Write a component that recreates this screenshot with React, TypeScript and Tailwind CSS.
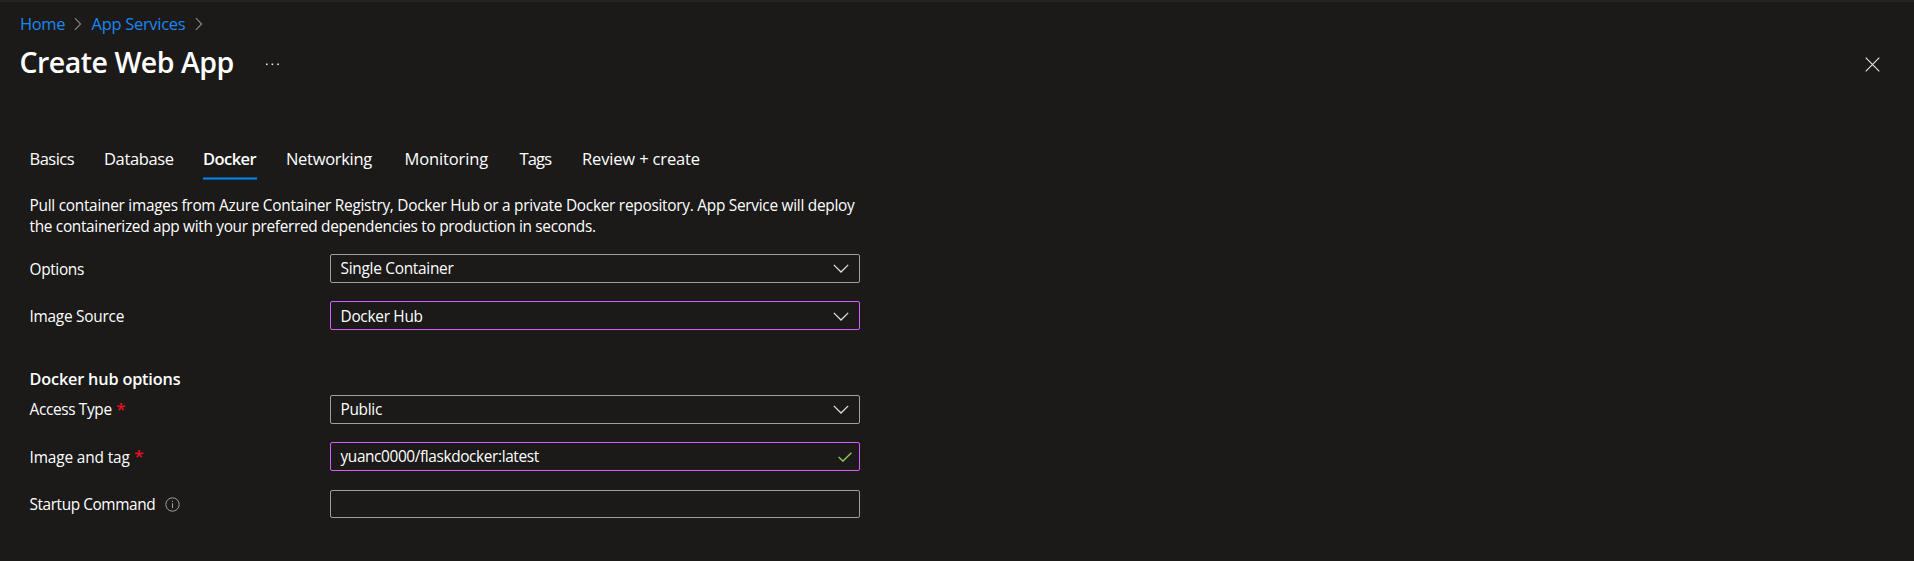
import type { ReactNode } from "react";

function Crumb() {
  return (
    <svg width="8" height="14" viewBox="0 0 8 14" fill="none" stroke="#8a8886" strokeWidth="1.1">
      <path d="M1 1.2 6.6 7 1 12.8" />
    </svg>
  );
}

function Chevron({ className = "" }: { className?: string }) {
  return (
    <svg width="16" height="9" viewBox="0 0 16 9" className={className} fill="none" stroke="#e0dedc" strokeWidth="1.3">
      <path d="M0.8 0.9 8 8 15.2 0.9" />
    </svg>
  );
}

function Check() {
  return (
    <svg width="14" height="10" viewBox="0 0 14 10" fill="none" stroke="#92c353" strokeWidth="1.4">
      <path d="M0.6 5 5 9.1 13.4 0.7" />
    </svg>
  );
}

function Info() {
  return (
    <svg width="15" height="15" viewBox="0 0 15 15" fill="none" stroke="#a19f9d" strokeWidth="1">
      <circle cx="7.5" cy="7.5" r="6.7" />
      <path d="M7.5 6.2v5M7.5 3.8v1.2" />
    </svg>
  );
}

function Required() {
  return <span className="mb-[3px] ml-[4.5px] text-[17px] leading-none font-semibold text-[#e81123]">*</span>;
}

function Row({ label, className, children }: { label: ReactNode; className: string; children: ReactNode }) {
  return (
    <div className={`flex w-[830px] ${className}`}>
      <div className="flex h-[29px] w-[300px] shrink-0 items-center">{label}</div>
      {children}
    </div>
  );
}

function Box({ className, children }: { className: string; children?: ReactNode }) {
  return (
    <div className={`flex w-[530px] items-center justify-between rounded-[2px] border pl-[10px] ${className}`}>
      {children}
    </div>
  );
}

export default function App() {
  return (
    <div className="h-[561px] w-[1914px] overflow-hidden border-t-2 border-[#252423] bg-[#1b1a19] font-['Open_Sans','Noto_Sans',sans-serif] text-[15.4px] text-white">
      <nav className="mt-3 flex h-5 items-center pl-5 text-[16.5px] leading-5 text-[#1a86f0]">
        <a className="w-[54px] tracking-[-0.4px]">Home</a>
        <Crumb />
        <a className="ml-[9.5px] w-[103.5px] tracking-[-0.3px]">App Services</a>
        <Crumb />
      </nav>

      <header className="mt-2 flex h-10 items-center pl-[19.5px]">
        <h1 className="w-[245.5px] text-[28.5px] leading-10 font-semibold tracking-[-0.5px] whitespace-nowrap">
          Create Web App
        </h1>
        <svg width="15" height="3" viewBox="0 0 15 3" className="mt-[4px]" fill="#e8e6e4">
          <rect x="1" y="0.5" width="1.6" height="1.6" />
          <rect x="6.6" y="0.5" width="1.6" height="1.6" />
          <rect x="12.2" y="0.5" width="1.6" height="1.6" />
        </svg>
        <svg width="15" height="15" viewBox="0 0 15 15" className="mt-[4px] mr-[34px] ml-auto" fill="none" stroke="#e8e6e4" strokeWidth="1.1">
          <path d="M0.7 0.7 14.3 14.3M14.3 0.7 0.7 14.3" />
        </svg>
      </header>

      <div className="mt-[65px] flex h-[33px] pl-[29.5px] text-[16.5px] leading-6 whitespace-nowrap">
        <span className="w-[74.5px] tracking-[-0.52px]">Basics</span>
        <span className="w-[99px] tracking-[-0.36px]">Database</span>
        <span className="mr-[29px] flex w-[54px] flex-col justify-between font-semibold tracking-[-0.55px]">
          Docker
          <span className="h-[3px] border-y border-[#0c5596] bg-[#0f7fe0]" />
        </span>
        <span className="w-[118.5px] tracking-[-0.3px]">Networking</span>
        <span className="w-[115px] tracking-[-0.13px]">Monitoring</span>
        <span className="w-[62.5px] tracking-[-0.85px]">Tags</span>
        <span className="tracking-[-0.15px]">Review + create</span>
      </div>

      <main className="pl-[29.5px]">
        <p className="mt-[15px] leading-[21px] whitespace-nowrap">
          <span className="block tracking-[-0.268px]">
            Pull container images from Azure Container Registry, Docker Hub or a private Docker repository. App Service will deploy
          </span>
          <span className="block tracking-[-0.312px]">
            the containerized app with your preferred dependencies to production in seconds.
          </span>
        </p>

        <Row className="mt-[17px]" label={<span className="pt-[2px] tracking-[-0.34px]">Options</span>}>
          <Box className="h-[29px] border-[#a19f9d] pr-[9.5px]">
            <span className="tracking-[-0.27px]">Single Container</span>
            <Chevron />
          </Box>
        </Row>
        <Row className="mt-[18px]" label={<span className="pt-[2px] tracking-[-0.25px]">Image Source</span>}>
          <Box className="h-[29px] border-[#d65eff] pr-[9.5px]">
            <span className="pt-[2px] tracking-[-0.28px]">Docker Hub</span>
            <Chevron className="mt-[2px]" />
          </Box>
        </Row>

        <h2 className="mt-[37px] h-6 text-[16.25px] leading-6 font-semibold tracking-[-0.17px]">Docker hub options</h2>

        <Row
          className="mt-[4px]"
          label={
            <>
              <span className="pt-px tracking-[-0.35px]">Access Type</span>
              <Required />
            </>
          }
        >
          <Box className="h-[29px] border-[#a19f9d] pr-[9.5px]">
            <span className="pt-px tracking-[-0.3px]">Public</span>
            <Chevron />
          </Box>
        </Row>
        <Row
          className="mt-[18px]"
          label={
            <>
              <span className="pt-[2px] tracking-[-0.13px]">Image and tag</span>
              <Required />
            </>
          }
        >
          <Box className="h-[29px] border-[#d65eff] pr-[7px]">
            <span className="tracking-[-0.38px]">yuanc0000/flaskdocker:latest</span>
            <Check />
          </Box>
        </Row>
        <Row
          className="mt-[19px]"
          label={
            <>
              <span className="mr-[10px] tracking-[-0.42px]">Startup Command</span>
              <Info />
            </>
          }
        >
          <Box className="h-[28px] border-[#a19f9d]" />
        </Row>
      </main>
    </div>
  );
}
